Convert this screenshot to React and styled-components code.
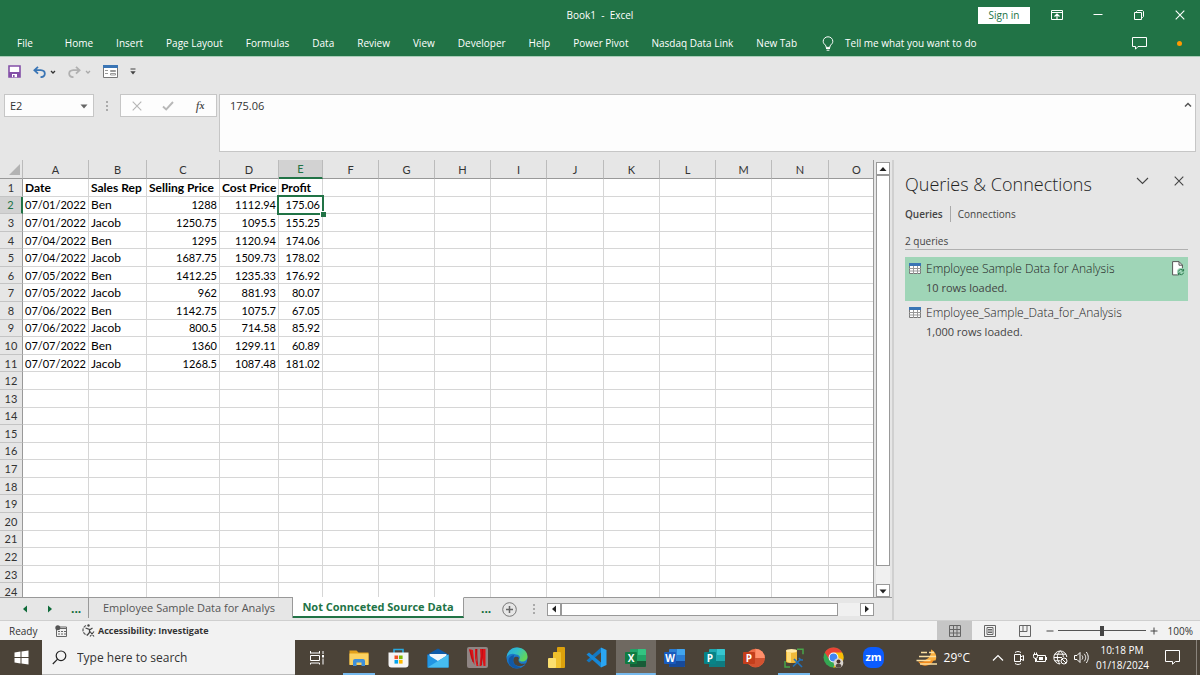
import React, { useState } from 'react'
import styled, { createGlobalStyle, css } from 'styled-components'

const menuItems = ['File', 'Home', 'Insert', 'Page Layout', 'Formulas', 'Data', 'Review', 'View', 'Developer', 'Help', 'Power Pivot', 'Nasdaq Data Link', 'New Tab']

const columns = [
    { name: 'A', width: 66 },
    { name: 'B', width: 58 },
    { name: 'C', width: 73 },
    { name: 'D', width: 59 },
    { name: 'E', width: 44 },
    { name: 'F', width: 56 },
    { name: 'G', width: 56 },
    { name: 'H', width: 56 },
    { name: 'I', width: 56 },
    { name: 'J', width: 57 },
    { name: 'K', width: 56 },
    { name: 'L', width: 56 },
    { name: 'M', width: 56 },
    { name: 'N', width: 57 },
    { name: 'O', width: 56 },
]

const sheet = [
    ['Date', 'Sales Rep', 'Selling Price', 'Cost Price', 'Profit'],
    ['07/01/2022', 'Ben', '1288', '1112.94', '175.06'],
    ['07/01/2022', 'Jacob', '1250.75', '1095.5', '155.25'],
    ['07/04/2022', 'Ben', '1295', '1120.94', '174.06'],
    ['07/04/2022', 'Jacob', '1687.75', '1509.73', '178.02'],
    ['07/05/2022', 'Ben', '1412.25', '1235.33', '176.92'],
    ['07/05/2022', 'Jacob', '962', '881.93', '80.07'],
    ['07/06/2022', 'Ben', '1142.75', '1075.7', '67.05'],
    ['07/06/2022', 'Jacob', '800.5', '714.58', '85.92'],
    ['07/07/2022', 'Ben', '1360', '1299.11', '60.89'],
    ['07/07/2022', 'Jacob', '1268.5', '1087.48', '181.02'],
]

const rowNumbers = Array.from({ length: 24 }, (_, i) => i + 1)

const queries = [
    { name: 'Employee Sample Data for Analysis', status: '10 rows loaded.' },
    { name: 'Employee_Sample_Data_for_Analysis', status: '1,000 rows loaded.' },
]

/* ---------- icons ---------- */

const Svg = ({ w = 16, h = w, box, children, ...rest }) => (
    <svg width={w} height={h} viewBox={box || `0 0 ${w} ${h}`} fill="none" aria-hidden="true" {...rest}>{children}</svg>
)

const Triangle = ({ dir = 'down', color = '#222', size = 8 }) => {
    const d = { down: 'M0.5 2.5h7l-3.5 4z', up: 'M0.5 6h7l-3.5-4z', left: 'M6 0.5v7l-4-3.5z', right: 'M2 0.5v7l4-3.5z' }
    return <Svg w={size} box="0 0 8 8"><path d={d[dir]} fill={color} /></Svg>
}

const SmallChevron = ({ color }) => (
    <Svg w={6} h={4}><path d="M1 1l2 2 2-2" stroke={color} strokeWidth="1.3" /></Svg>
)

const SaveIcon = () => (
    <Svg w={13}>
        <path d="M1 1h11v11H1z" fill="#fff" stroke="#8450a8" strokeWidth="1.6" />
        <path d="M1 7h11v5H1z" fill="#8450a8" />
        <path d="M4 9h5v3.2H4z" fill="#fff" />
        <path d="M5 10h1.6v2.2H5z" fill="#8450a8" />
    </Svg>
)

const UndoIcon = ({ color, flip }) => (
    <Svg w={13} h={12}>
        <g transform={flip ? 'matrix(-1 0 0 1 13 0)' : undefined}>
            <path d="M5 0.8L1.4 4.2 5 7.6M1.6 4.2h6.2c5.4 0.4 5.4 7-0.3 7" stroke={color} strokeWidth="1.8" />
        </g>
    </Svg>
)

const FormIcon = () => (
    <Svg w={15} h={13}>
        <path d="M0.5 0.5h14v12H0.5z" fill="#fff" stroke="#777" />
        <path d="M0 0h15v3H0z" fill="#3a75b5" />
        <path d="M2 5.5h3M2 8.5h3" stroke="#999" />
        <path d="M7.5 5.5h5v1h-5zM7.500 8.500h5v1.500h-5z" stroke="#999" />
    </Svg>
)

const BulbIcon = () => (
    <Svg w={12} h={15}>
        <path d="M4 11.4V9.8C2.6 8.4 1.2 7.4 1.2 5.3a4.8 4.5 0 0 1 9.6 0c0 2.1-1.400 3.100-2.800 4.500v1.600zM4 12.500h4M4.600 14.200h2.800" stroke="#fff" strokeWidth="1" />
    </Svg>
)

const GridIcon = () => (
    <Svg w={12} h={11}>
        <path d="M0.5 0.5h11v10H0.5z" fill="#fff" stroke="#777" />
        <path d="M0 0h12v3H0z" fill="#3a75b5" />
        <path d="M4.5 3v8M8.5 3v8M0 5.5h12M0 8h12" stroke="#999" />
    </Svg>
)

const SheetRefreshIcon = () => (
    <Svg w={13} h={15}>
        <path d="M0.6 0.6h6.4l3.4 3.4v9.9H0.6z" fill="#fff" stroke="#555" />
        <path d="M7 0.6v3.600h3.400" stroke="#555" />
        <circle cx="9" cy="11" r="4" fill="#9fd5b7" />
        <path d="M6.5 10.5a2.6 2.6 0 0 1 4.8-0.8M11.6 8v2h-2M11.6 11.6a2.6 2.6 0 0 1-4.8 0.8M6.5 14v-2h2" stroke="#217346" strokeWidth="0.9" />
    </Svg>
)

const CloseIcon = ({ w = 10, color = '#fff' }) => (
    <Svg w={w} box="0 0 10 10"><path d="M0.7 0.7l8.6 8.6M9.3 0.7L0.7 9.3" stroke={color} strokeWidth="1.1" /></Svg>
)

const OfficeIcon = ({ letter, dark, shades, round }) => (
    <Svg w={22} h={20}>
        {round ? (
            <>
                <circle cx="12.5" cy="10" r="9.3" fill={shades[1]} />
                <path d="M12.5 0.7a9.3 9.3 0 0 1 9.3 9.3h-9.3z" fill={shades[0]} />
                <path d="M3.2 10h18.6a9.3 9.3 0 0 1-18.600 0z" fill={shades[2]} />
            </>
        ) : (
            <>
                <rect x="5" y="1" width="16" height="18" rx="1" fill={shades[1]} />
                <path d="M13 1h7a1 1 0 0 1 1 1v5h-8z" fill={shades[0]} />
                <path d="M5 13h16v5a1 1 0 0 1-1 1H6a1 1 0 0 1-1-1z" fill={shades[2]} />
            </>
        )}
        <rect x="0" y="4" width="12" height="12" rx="1" fill={dark} />
        <text x="6" y="14" textAnchor="middle" fontSize="10" fontWeight="700" fontFamily="Open Sans, sans-serif" fill="#fff">{letter}</text>
    </Svg>
)

const ExplorerIcon = () => (
    <Svg w={20} h={18}>
        <path d="M0.5 1.5h7l2 2h10v12h-19z" fill="#e3a11b" />
        <path d="M0.5 4.5h19v11.5h-19z" fill="#fbd261" />
        <path d="M4 17v-5a2 2 0 0 1 2-2h8a2 2 0 0 1 2 2v5h-3.5v-3.5h-5V17z" fill="#3f8fd8" />
    </Svg>
)

const StoreIcon = () => (
    <Svg w={21} h={20}>
        <path d="M6 5V1.5h9V5" stroke="#29a9e0" strokeWidth="1.6" />
        <path d="M0.5 4.5h20v12a3 3 0 0 1-3 3h-14a3 3 0 0 1-3-3z" fill="#f5f5f5" />
        <path d="M6.5 7.5h3.6v3.6H6.5z" fill="#f25022" />
        <path d="M11 7.5h3.6v3.6H11z" fill="#7fba00" />
        <path d="M6.5 12h3.6v3.6H6.5z" fill="#00a4ef" />
        <path d="M11 12h3.6v3.6H11z" fill="#ffb900" />
    </Svg>
)

const MailIcon = () => (
    <Svg w={22} h={20}>
        <path d="M0.5 6.5L11 0.5l10.5 6v12.5h-21z" fill="#0f5ba8" />
        <path d="M2.5 6h17v8h-17z" fill="#f2f7fb" />
        <path d="M0.5 6.5L11 13l10.5-6.5V19.5h-21z" fill="#2196e3" />
        <path d="M0.5 19.5L11 13l10.500-6.500V19.500z" fill="#46bdf1" />
    </Svg>
)

const RedBarsIcon = () => (
    <Svg w={21}>
        <rect width="21" height="21" rx="2" fill="#8f8583" />
        <path d="M2 2l4 1 1.500 15-3.500-7zM8 2h2.500l-1 11 2 6h-2L8 11zM13 2h5.500v17h-2l-1-8-1 8h-2l1-10z" fill="#e01217" />
        <path d="M3 3l3 12M9.500 2l1 15M15.500 2l-1 16" stroke="#a90f13" strokeWidth="0.8" />
    </Svg>
)

const EdgeIcon = () => (
    <Svg w={22}>
        <defs>
            <linearGradient id="edgeTop" x1="0" y1="0" x2="1" y2="0.5">
                <stop offset="0" stopColor="#2aa7e2" />
                <stop offset="0.5" stopColor="#32c0c9" />
                <stop offset="1" stopColor="#62d65a" />
            </linearGradient>
        </defs>
        <circle cx="11" cy="11" r="10.5" fill="#1b78c9" />
        <path d="M0.5 11C0.8 4.5 5.5 0.5 11 0.5c6 0 10.5 4.2 10.5 9 0 3.5-2.5 5-5 5-2.6 0-4-1-3-2.4 1.3-2.3-0.5-4.6-3.5-4.6C6 5.5 1.5 7.5 0.5 11z" fill="url(#edgeTop)" />
        <path d="M7.5 11.5c-1.500 5 3 8.500 7.500 7.500 2-0.300 3.800-1.500 4.800-2.800-3 1.600-7.800 0.300-7.300-3.800l0.500-1.400c-1.500-2-4.800-1.500-5.500 0.500z" fill="#4b4338" />
        <path d="M7.5 11.5c-1.200 4.500 2.500 8.500 8 8.700-7 3.300-13-1.200-13-6.500 0-3 2-5.200 5.500-5.700z" fill="#1259a6" />
    </Svg>
)

const PowerBiIcon = () => (
    <Svg w={18} h={21}>
        <rect x="9" y="0" width="8" height="21" rx="1" fill="#dca10c" />
        <rect x="5" y="5" width="8" height="16" rx="1" fill="#f0c12d" />
        <rect x="0" y="11" width="8" height="10" rx="1" fill="#fbdf6f" />
    </Svg>
)

const CodeIcon = () => (
    <Svg w={21}>
        <path d="M15 0.5L20.5 3v15L15 20.5z" fill="#2aa5f2" />
        <path d="M15 0.5v5L3 15.5l-2.500-2z" fill="#1377c0" />
        <path d="M15 20.5v-5L3 5.5l-2.500 2z" fill="#1688d8" />
    </Svg>
)

const DatabaseIcon = () => (
    <Svg w={20}>
        <path d="M13 1.2h6v5M1 13v6h5" stroke="#48a548" strokeWidth="1.5" />
        <path d="M2 2.5v11c0 2 11 2 11 0v-11z" fill="#f1b93a" />
        <path d="M3 4v9.500c1 0.800 3 1 4 1V5z" fill="#ffdc78" />
        <ellipse cx="7.5" cy="2.8" rx="5.5" ry="1.9" fill="#ffe9a8" />
        <path d="M9 18.500l8-7.500M10 11l8 8M15 10l1.500 2 2.500 0" stroke="#2471b8" strokeWidth="1.7" />
    </Svg>
)

const ChromeIcon = () => (
    <Svg w={22}>
        <circle cx="10.5" cy="10.5" r="10" fill="#34a853" />
        <path d="M1.8 5.5a10 10 0 0 1 17.4 0L10.5 10.5l-3.500 3z" fill="#ea4335" />
        <path d="M19.200 5.500a10 10 0 0 1-9 15l5-9-4-6z" fill="#fbbc05" />
        <circle cx="10.5" cy="10.5" r="4.9" fill="#fff" />
        <circle cx="10.5" cy="10.5" r="3.9" fill="#4285f4" />
        <circle cx="15.5" cy="16" r="4.8" fill="#d8d3cd" />
        <circle cx="15.5" cy="14.5" r="2" fill="#47332b" />
        <path d="M12.5 19.5c0-4 6-4 6 0-2 1.600-4 1.600-6 0z" fill="#574a44" />
    </Svg>
)

const ZoomIcon = () => (
    <Svg w={21}>
        <rect width="21" height="21" rx="8" fill="#0b5cff" />
        <text x="10.5" y="14" textAnchor="middle" fontSize="11" fontWeight="700" fontFamily="Open Sans, sans-serif" fill="#fff">zm</text>
    </Svg>
)

const TaskViewIcon = () => (
    <Svg w={15}>
        <path d="M0.5 3.5V1M9.5 3.5V1M0.5 3h9M0.5 5.5h9v5h-9zM0.5 14.5V13h9v1.5M13 1v3M13 8.500v6" stroke="#fff" />
        <path d="M12 5h2v2.5h-2z" fill="#fff" />
    </Svg>
)

const apps = [
    { name: 'Task View', icon: <TaskViewIcon /> },
    { name: 'File Explorer', icon: <ExplorerIcon />, running: true },
    { name: 'Microsoft Store', icon: <StoreIcon /> },
    { name: 'Mail', icon: <MailIcon /> },
    { name: 'Red Bars', icon: <RedBarsIcon /> },
    { name: 'Edge', icon: <EdgeIcon /> },
    { name: 'Power BI', icon: <PowerBiIcon /> },
    { name: 'Code', icon: <CodeIcon /> },
    { name: 'Excel', icon: <OfficeIcon letter="X" dark="#107c41" shades={['#33c481', '#21a366', '#185c37']} />, running: true, active: true },
    { name: 'Word', icon: <OfficeIcon letter="W" dark="#185abd" shades={['#41a5ee', '#2b7cd3', '#174a9a']} /> },
    { name: 'Publisher', icon: <OfficeIcon letter="P" dark="#078387" shades={['#37c6d0', '#1fa9b0', '#0e7b80']} /> },
    { name: 'PowerPoint', icon: <OfficeIcon round letter="P" dark="#c43e1c" shades={['#ff8f6b', '#ed6c47', '#d35230']} /> },
    { name: 'Data Tools', icon: <DatabaseIcon />, running: true },
    { name: 'Chrome', icon: <ChromeIcon /> },
    { name: 'Zoom', icon: <ZoomIcon /> },
]

/* ---------- sections ---------- */

function Header() {
    return (
        <HeaderStyled>
            <TitleBar>
                <span />
                <h1>Book1&nbsp; -&nbsp; Excel</h1>
                <WindowControls>
                    <SignIn type="button">Sign in</SignIn>
                    <WindowButton aria-label="Ribbon display options">
                        <Svg w={12} h={10}>
                            <path d="M0.5 0.5h11v9H0.5zM0.5 2.5h11" stroke="#fff" />
                            <path d="M6 9V4.500M3.500 6.500l2.500-2.500 2.500 2.500" stroke="#fff" strokeWidth="1.200" />
                        </Svg>
                    </WindowButton>
                    <WindowButton aria-label="Minimize"><Svg w={10}><path d="M0.5 4.5h9" stroke="#fff" /></Svg></WindowButton>
                    <WindowButton aria-label="Restore">
                        <Svg w={10}><path d="M0.5 2.5h7v7h-7zM2.5 2.5v-1l1-1h5l1 1v5l-1 1h-1" stroke="#fff" /></Svg>
                    </WindowButton>
                    <WindowButton aria-label="Close"><CloseIcon /></WindowButton>
                </WindowControls>
            </TitleBar>
            <Menu>
                {menuItems.map((item) => <MenuButton key={item} type="button">{item}</MenuButton>)}
                <TellMe type="button"><BulbIcon />Tell me what you want to do</TellMe>
                <Comments type="button" aria-label="Comments">
                    <Svg w={15} h={13}><path d="M0.5 0.5h14v9H6l-2.500 2.700V9.500h-3z" stroke="#fff" /></Svg>
                </Comments>
                <Dot />
            </Menu>
        </HeaderStyled>
    )
}

function FormulaRow({ value }) {
    return (
        <FormulaStyled>
            <NameBox>
                <input aria-label="Name box" defaultValue="E2" />
                <button type="button" aria-label="Open name list"><Triangle color="#666" /></button>
            </NameBox>
            <Grip />
            <FormulaButtons>
                <button type="button" aria-label="Cancel"><CloseIcon color="#b5b5b5" /></button>
                <button type="button" aria-label="Enter">
                    <Svg w={12} h={10}><path d="M1 5.5l3.200 3L11 1" stroke="#b8b8b8" strokeWidth="1.900" /></Svg>
                </button>
                <button type="button" aria-label="Insert function"><i>f</i><small>x</small></button>
            </FormulaButtons>
            <FormulaInput>
                <textarea aria-label="Formula bar" defaultValue={value} />
                <button type="button" aria-label="Collapse formula bar">
                    <Svg w={8} h={6}><path d="M1 4.5l3-3 3 3" stroke="#555" strokeWidth="1.500" /></Svg>
                </button>
            </FormulaInput>
        </FormulaStyled>
    )
}

function Sheet() {
    return (
        <SheetViewport>
            <SheetTable>
                <colgroup>
                    <col width="23" />
                    {columns.map(({ name, width }) => <col key={name} width={width} />)}
                </colgroup>
                <thead>
                    <tr>
                        <Corner aria-label="Select all"><Svg w={11}><path d="M11 0v11H0z" fill="#b3b3b3" /></Svg></Corner>
                        {columns.map(({ name }) => <ColumnHead key={name} $selected={name === 'E'}>{name}</ColumnHead>)}
                    </tr>
                </thead>
                <tbody>
                    {rowNumbers.map((number) => {
                        const cells = sheet[number - 1] || []
                        return (
                            <tr key={number}>
                                <RowHead $selected={number === 2}>{number}</RowHead>
                                {columns.map(({ name }, i) => (
                                    <Cell
                                        key={name}
                                        $bold={number === 1}
                                        $numeric={number > 1 && i !== 1}
                                        $selected={number === 2 && name === 'E'}
                                    >
                                        {cells[i]}
                                    </Cell>
                                ))}
                            </tr>
                        )
                    })}
                </tbody>
            </SheetTable>
        </SheetViewport>
    )
}

function SheetTabs() {
    return (
        <TabsStyled>
            <TabNav>
                <button type="button" aria-label="Previous sheet"><Triangle dir="left" color="#0f6b3a" /></button>
                <button type="button" aria-label="Next sheet"><Triangle dir="right" color="#0f6b3a" /></button>
                <button type="button">...</button>
            </TabNav>
            <Tab type="button">Employee Sample Data for Analys</Tab>
            <Tab type="button" $active>Not Connceted Source Data</Tab>
            <TabEnd>
                <More type="button">...</More>
                <NewSheet type="button" aria-label="New sheet">
                    <Svg w={15}><circle cx="7.5" cy="7.5" r="6.8" stroke="#777" /><path d="M7.5 4v7M4 7.5h7" stroke="#666" strokeWidth="1.500" /></Svg>
                </NewSheet>
                <Grip />
                <HScroll>
                    <ScrollButton type="button" aria-label="Scroll left"><Triangle dir="left" /></ScrollButton>
                    <HThumb />
                    <ScrollButton type="button" aria-label="Scroll right"><Triangle dir="right" /></ScrollButton>
                </HScroll>
            </TabEnd>
        </TabsStyled>
    )
}

function QueriesPanel() {
    const [selected, setSelected] = useState(0)
    return (
        <PanelStyled>
            <PanelTitle>
                <h2>Queries &amp; Connections</h2>
                <button type="button" aria-label="Pane options"><Svg w={13} h={8}><path d="M1 1l5.5 5.5L12 1" stroke="#444" strokeWidth="1.100" /></Svg></button>
                <button type="button" aria-label="Close pane"><CloseIcon color="#444" /></button>
            </PanelTitle>
            <PanelTabs>
                <PanelTab type="button" $active>Queries</PanelTab>
                <PanelTab type="button">Connections</PanelTab>
            </PanelTabs>
            <Count>2 queries</Count>
            {queries.map(({ name, status }, i) => (
                <Query key={name} type="button" $active={selected === i} onClick={() => setSelected(i)}>
                    <GridIcon />
                    <span>
                        <QueryName>{name}</QueryName>
                        <QueryStatus>{status}</QueryStatus>
                    </span>
                    {selected === i && <SheetRefreshIcon />}
                </Query>
            ))}
        </PanelStyled>
    )
}

function StatusBar() {
    const [zoom, setZoom] = useState(50)
    return (
        <StatusStyled>
            <Ready>Ready</Ready>
            <IconButton type="button" aria-label="Record macro">
                <Svg w={12} h={12}>
                    <path d="M1.5 3.5h10v8h-10zM5 2h6.500v2" stroke="#666" />
                    <circle cx="2.8" cy="2.8" r="2.5" fill="#555" />
                    <path d="M3 6.5h2M6 6.5h2M9 6.5h2M3 9h2M6 9h2M9 9h2" stroke="#666" />
                </Svg>
            </IconButton>
            <Accessibility type="button">
                <Svg w={14} h={13}>
                    <path d="M5 1.5A5 5 0 0 0 6 11" stroke="#555" strokeWidth="1.2" strokeDasharray="3 1" />
                    <circle cx="7.5" cy="1.500" r="1.200" fill="#444" />
                    <path d="M4.500 4l4 1.500v3L6 11.500M8.500 6l3-2M9 7.500l4 5M13 7.500l-4 5" stroke="#444" strokeWidth="1.200" />
                </Svg>
                Accessibility: Investigate
            </Accessibility>
            <ViewButtons>
                <ViewButton type="button" aria-label="Normal" $active>
                    <Svg w={12} h={12}><path d="M0.5 0.5h11v11H0.5zM4.5 0.5v11M8 0.5v11M0.5 4.500h11M0.500 8h11" stroke="#666" /></Svg>
                </ViewButton>
                <ViewButton type="button" aria-label="Page layout">
                    <Svg w={12} h={12}><path d="M0.5 0.5h11v11H0.5zM3 2.5h6v7H3zM4 4.5h4M4 6h4M4 7.500h4" stroke="#666" /></Svg>
                </ViewButton>
                <ViewButton type="button" aria-label="Page break preview">
                    <Svg w={12} h={12}><path d="M0.5 0.5h11v11H0.5zM4 0.5v6M8 0.5v6M0.5 6.5H8" stroke="#666" /></Svg>
                </ViewButton>
            </ViewButtons>
            <ZoomStep type="button" aria-label="Zoom out"><Svg w={8}><path d="M0.5 4h7" stroke="#444" /></Svg></ZoomStep>
            <ZoomSlider type="range" aria-label="Zoom" value={zoom} onChange={(e) => setZoom(e.target.value)} />
            <ZoomStep type="button" aria-label="Zoom in"><Svg w={8}><path d="M0.5 4h7M4 0.5v7" stroke="#444" /></Svg></ZoomStep>
            <ZoomValue>100%</ZoomValue>
        </StatusStyled>
    )
}

function Taskbar() {
    return (
        <TaskbarStyled>
            <Start type="button" aria-label="Start">
                <Svg w={15}><path d="M0.5 2.5L6.5 1.6V7H0.5zM7.5 1.5L14.5 0.5V7h-7zM0.5 8h6v5.4L0.5 12.500zM7.500 8h7v6.500l-7-1z" fill="#fff" /></Svg>
            </Start>
            <Search>
                <Svg w={15}><circle cx="9" cy="5.8" r="4.8" stroke="#222" strokeWidth="1.2" /><path d="M5.6 9.2L0.8 14" stroke="#222" strokeWidth="1.2" /></Svg>
                <input aria-label="Search" placeholder="Type here to search" />
            </Search>
            <Apps>
                {apps.map(({ name, icon, running, active }) => (
                    <AppButton key={name} type="button" aria-label={name} $running={running} $active={active}>{icon}</AppButton>
                ))}
            </Apps>
            <Tray>
                <Weather type="button">
                    <Svg w={22} h={20}>
                        <path d="M15 1.5a9 9 0 1 1-13 12c9 1 14-4 13-12z" fill="#f08a1d" />
                        <path d="M15 1.5c4.500 2 6.500 7 4.500 11H8c5-1.500 8-6 7-11z" fill="#fbae3c" />
                        <path d="M5 4.5h6M13 4.5h5M3 8.500h17M0.500 12.500h14M4 16h17" stroke="#fbe0a0" strokeWidth="1.600" />
                    </Svg>
                    29°C
                </Weather>
                <TrayIcons>
                    <button type="button" aria-label="Show hidden icons"><Svg w={12} h={8}><path d="M1 6.5l5-5 5 5" stroke="#fff" strokeWidth="1.200" /></Svg></button>
                    <button type="button" aria-label="Meet now">
                        <Svg w={12} h={14}><path d="M1.5 3.5h6v7h-6zM7.5 6l3-1.5v5l-3-1.500M2 1.500c2-1.300 4-1.300 6 0M2 12.500c2 1.300 4 1.300 6 0" stroke="#fff" /></Svg>
                    </button>
                    <button type="button" aria-label="Battery">
                        <Svg w={14} h={12}><path d="M5 3.5h7.5v6H3.5V7M13.500 5v3M0.500 2.500h4v2a2 2 0 0 1-4 0zM1.500 0.500v2M3.500 0.500v2M2.500 6v4" stroke="#fff" /><path d="M6 5h4v3H6z" fill="#fff" /></Svg>
                    </button>
                    <button type="button" aria-label="Network">
                        <Svg w={15}><path d="M7 14A6.5 6.5 0 1 1 13.800 7M7.300 1c-4 3-4 9.500 0 13M7.300 1c2 1.500 3 3.500 3 6M1 7.500h8M2 4.200h11M2 10.800h5" stroke="#fff" /><circle cx="11" cy="11" r="3" stroke="#fff" /><path d="M9 9l4 4" stroke="#fff" /></Svg>
                    </button>
                    <button type="button" aria-label="Volume">
                        <Svg w={15} h={13}><path d="M0.5 4.5H3l3-3v10l-3-3H0.5zM8 4.500c1 1.300 1 2.700 0 4M10.200 2.800c2 2.500 2 5 0 7.500M12.300 1c2.600 3.500 2.600 7.500 0 11" stroke="#fff" /></Svg>
                    </button>
                </TrayIcons>
                <Clock><time>10:18 PM</time><time>01/18/2024</time></Clock>
                <Notifications type="button" aria-label="Notifications">
                    <Svg w={15} h={15}><path d="M0.5 0.5h14v11h-4L7.5 14.200V11.500h-7z" stroke="#fff" /></Svg>
                </Notifications>
            </Tray>
        </TaskbarStyled>
    )
}

function App() {
    return (
        <>
            <GlobalStyle />
            <Window>
                <Header />
                <QuickAccess>
                    <button type="button" aria-label="Save"><SaveIcon /></button>
                    <button type="button" aria-label="Undo"><UndoIcon color="#3a75b5" /><SmallChevron color="#333" /></button>
                    <button type="button" aria-label="Redo"><UndoIcon color="#b0b0b0" flip /><SmallChevron color="#aaa" /></button>
                    <button type="button" aria-label="Form"><FormIcon /></button>
                    <button type="button" aria-label="Customize toolbar"><Svg w={6} h={7}><path d="M0.5 1h5" stroke="#444" /><path d="M0.3 3.2h5.4L3 6.5z" fill="#444" /></Svg></button>
                </QuickAccess>
                <FormulaRow value="175.06" />
                <Workspace>
                    <Main>
                        <SheetRow>
                            <Sheet />
                            <VScroll>
                                <ScrollButton type="button" aria-label="Scroll up"><Triangle dir="up" /></ScrollButton>
                                <VThumb />
                                <ScrollButton type="button" aria-label="Scroll down"><Triangle /></ScrollButton>
                            </VScroll>
                        </SheetRow>
                        <SheetTabs />
                    </Main>
                    <QueriesPanel />
                </Workspace>
                <StatusBar />
                <Taskbar />
            </Window>
        </>
    )
}

/* ---------- styles ---------- */

const GlobalStyle = createGlobalStyle`
    *, *::before, *::after{
        box-sizing: border-box;
    }
    body{
        margin: 0;
        font-family: 'Open Sans', 'Noto Sans', sans-serif;
        font-size: 10px;
        color: #333;
    }
    h1, h2, p{
        margin: 0;
        font-weight: 400;
    }
    button, input, textarea{
        margin: 0;
        padding: 0;
        border: 0;
        background: none;
        font: inherit;
        color: inherit;
        outline: none;
    }
    svg{
        display: block;
        flex: none;
    }
`;

const Window = styled.div`
    height: 100vh;
    display: flex;
    flex-direction: column;
    overflow: hidden;
    background: #e6e6e6;
`;

const HeaderStyled = styled.header`
    flex: none;
    background: #217346;
    color: #fff;
    border-bottom: 1px solid #a9cdb8;
`;

const TitleBar = styled.div`
    height: 30px;
    display: grid;
    grid-template-columns: 1fr auto 1fr;
    align-items: center;
    h1{
        font-size: 10px;
    }
`;

const WindowControls = styled.div`
    display: flex;
    justify-content: flex-end;
    align-items: center;
    height: 28px;
`;

const SignIn = styled.button`
    width: 52px;
    height: 17px;
    margin-right: 6px;
    background: #fff;
    color: #217346;
    font-size: 10px;
    line-height: 16px;
`;

const WindowButton = styled.button`
    width: 41px;
    height: 26px;
    display: flex;
    align-items: center;
    justify-content: center;
`;

const Menu = styled.nav`
    height: 26px;
    padding: 0 18px 0 17px;
    display: flex;
    align-items: center;
    gap: 23px;
`;

const MenuButton = styled.button`
    white-space: nowrap;
    &:first-child{
        margin-right: 9px;
    }
`;

const TellMe = styled.button`
    margin-left: 2px;
    display: flex;
    align-items: center;
    gap: 11px;
    white-space: nowrap;
`;

const Comments = styled.button`
    margin-left: auto;
    margin-right: 7px;
`;

const Dot = styled.span`
    width: 5px;
    height: 5px;
    border-radius: 50%;
    background: #f90;
`;

const QuickAccess = styled.div`
    flex: none;
    height: 37px;
    padding: 0 8px 8px;
    display: flex;
    align-items: center;
    gap: 12px;
    button{
        display: flex;
        align-items: center;
        gap: 4px;
    }
`;

const FormulaStyled = styled.div`
    flex: none;
    padding: 0 4px 8px;
    display: flex;
    align-items: flex-start;
`;

const NameBox = styled.div`
    width: 90px;
    height: 23px;
    padding: 0 5px;
    display: flex;
    align-items: center;
    background: #fdfdfd;
    border: 1px solid #c6c6c6;
    input{
        flex: 1;
        min-width: 0;
        font-size: 11px;
    }
`;

const Grip = styled.span`
    width: 2px;
    height: 10px;
    margin: 7px 12px;
    flex: none;
    background: repeating-linear-gradient(#aaa 0 2px, transparent 2px 4px);
`;

const FormulaButtons = styled.div`
    width: 97px;
    height: 23px;
    margin-right: 2px;
    display: grid;
    grid-template-columns: repeat(3, 1fr);
    background: #fdfdfd;
    border: 1px solid #c6c6c6;
    button{
        display: flex;
        align-items: center;
        justify-content: center;
        font-family: 'Liberation Serif', serif;
        font-size: 13px;
        color: #444;
    }
    small{
        font-size: 10px;
        font-style: italic;
        font-weight: 700;
        line-height: 8px;
        align-self: flex-end;
        padding-bottom: 6px;
    }
`;

const FormulaInput = styled.div`
    flex: 1;
    height: 58px;
    display: flex;
    align-items: flex-start;
    background: #fdfdfd;
    border: 1px solid #c6c6c6;
    textarea{
        flex: 1;
        height: 100%;
        padding: 3px 10px;
        resize: none;
        font-size: 11px;
        line-height: 15px;
    }
    button{
        padding: 7px 3px;
    }
`;

const Workspace = styled.div`
    flex: 1;
    min-height: 0;
    display: flex;
`;

const Main = styled.main`
    flex: 1;
    min-width: 0;
    display: flex;
    flex-direction: column;
    border-right: 2px solid #d0d0d0;
`;

const SheetRow = styled.div`
    flex: 1;
    min-height: 0;
    display: flex;
`;

const SheetViewport = styled.div`
    flex: 1;
    min-width: 0;
    overflow: hidden;
    border-right: 1px solid #999;
`;

const SheetTable = styled.table`
    width: 885px;
    height: calc(100% + 4px);
    table-layout: fixed;
    border-collapse: separate;
    border-spacing: 0;
    font-family: Lato, 'Open Sans', sans-serif;
    font-size: 12px;
    line-height: 14px;
    color: #000;
    th, td{
        padding: 1px 2px 0;
        white-space: nowrap;
    }
`;

const selectedHead = css`
    background: #d2d2d2;
    color: #217346;
`;

const ColumnHead = styled.th`
    height: 19px;
    font-size: 11px;
    font-weight: 400;
    color: #333;
    border-right: 1px solid #bbb;
    border-bottom: 1px solid #999;
    ${props => props.$selected && css`
        ${selectedHead}
        border-bottom: 2px solid #217346;
    `}
`;

const Corner = styled.th`
    border-right: 1px solid #bbb;
    border-bottom: 1px solid #999;
    svg{
        margin-left: auto;
    }
`;

const RowHead = styled.th`
    font-size: 11px;
    font-weight: 400;
    color: #333;
    background: #e6e6e6;
    border-right: 1px solid #999;
    border-bottom: 1px solid #c4c4c4;
    ${props => props.$selected && css`
        ${selectedHead}
        border-right: 2px solid #217346;
    `}
`;

const Cell = styled.td`
    position: relative;
    background: #fff;
    border-right: 1px solid #d6d6d6;
    border-bottom: 1px solid #d6d6d6;
    font-weight: ${props => props.$bold ? 700 : 400};
    ${props => props.$numeric && css`
        text-align: right;
        font-size: 11px;
    `}
    ${props => props.$selected && css`
        z-index: 1;
        &::before{
            content: '';
            position: absolute;
            inset: -2px;
            border: 2px solid #217346;
        }
        &::after{
            content: '';
            position: absolute;
            right: -4px;
            bottom: -4px;
            width: 6px;
            height: 6px;
            background: #217346;
            border: solid #fff;
            border-width: 1px 0 0 1px;
        }
    `}
`;

const ScrollButton = styled.button`
    flex: none;
    width: 14px;
    height: 13px;
    display: flex;
    align-items: center;
    justify-content: center;
    background: #fff;
    border: 1px solid #999;
`;

const VScroll = styled.div`
    flex: none;
    width: 14px;
    margin: 2px 2px 0;
    display: flex;
    flex-direction: column;
    background: #f0f0f0;
`;

const VThumb = styled.div`
    flex: 1;
    margin-bottom: 18px;
    background: #fff;
    border: 1px solid #999;
`;

const TabsStyled = styled.div`
    flex: none;
    height: 23px;
    display: flex;
`;

const TabNav = styled.div`
    width: 88px;
    padding-left: 21px;
    display: flex;
    align-items: center;
    gap: 17px;
    border-top: 1px solid #999;
    font-weight: 700;
    font-size: 12px;
    line-height: 12px;
    color: #0f6b3a;
`;

const Tab = styled.button`
    height: 21px;
    padding: 0 9px;
    min-width: 171px;
    font-size: 11px;
    line-height: 18px;
    white-space: nowrap;
    color: #555;
    border-top: 1px solid #999;
    border-right: 1px solid #999;
    ${props => props.$active ? css`
        background: #fff;
        color: #217346;
        font-weight: 700;
        border-top-color: #fff;
        border-bottom: 2px solid #217346;
    ` : css`
        min-width: 205px;
        border-left: 1px solid #999;
        padding: 0 14px;
        text-align: left;
    `}
`;

const TabEnd = styled.div`
    flex: 1;
    min-width: 0;
    padding: 0 18px 0 17px;
    display: flex;
    align-items: center;
    border-top: 1px solid #999;
`;

const More = styled.button`
    margin-right: 11px;
    font-weight: 700;
    font-size: 12px;
    line-height: 12px;
    color: #0f6b3a;
`;

const NewSheet = styled.button`
    margin-right: 4px;
`;

const HScroll = styled.div`
    flex: 1;
    display: flex;
    background: #f0f0f0;
`;

const HThumb = styled.div`
    flex: 1;
    margin-right: 22px;
    background: #fff;
    border: 1px solid #999;
`;

const PanelStyled = styled.aside`
    flex: none;
    width: 306px;
    padding: 10px 12px 0 11px;
    display: flex;
    flex-direction: column;
    color: #444;
`;

const PanelTitle = styled.div`
    display: flex;
    align-items: center;
    padding-right: 4px;
    gap: 25px;
    h2{
        flex: 1;
        font-size: 18px;
        line-height: 28px;
        font-weight: 300;
        color: #222;
    }
    button{
        padding-bottom: 6px;
    }
`;

const PanelTabs = styled.div`
    display: flex;
    margin-top: 8px;
`;

const PanelTab = styled.button`
    height: 16px;
    line-height: 16px;
    font-weight: ${props => props.$active ? 600 : 400};
    & + &{
        margin-left: 7px;
        padding-left: 7px;
        border-left: 1px solid #aaa;
    }
`;

const Count = styled.p`
    margin: 11px 0 7px;
    height: 17px;
    line-height: 16px;
    border-bottom: 1px solid #b0b0b0;
`;

const Query = styled.button`
    height: 44px;
    padding: 3px 3px 0 4px;
    display: flex;
    align-items: flex-start;
    gap: 5px;
    text-align: left;
    background: ${props => props.$active ? '#9fd5b7' : 'transparent'};
    > span{
        flex: 1;
    }
    > svg:first-child{
        margin-top: 3px;
    }
    > svg:last-child{
        margin-top: 1px;
    }
`;

const QueryName = styled.span`
    display: block;
    font-size: 12px;
    line-height: 18px;
    font-weight: 300;
    color: #222;
`;

const QueryStatus = styled.span`
    display: block;
    font-size: 11px;
    line-height: 19px;
`;

const StatusStyled = styled.footer`
    flex: none;
    height: 20px;
    padding: 0 7px 0 9px;
    display: flex;
    align-items: center;
    background: #f2f2f2;
    border-top: 1px solid #cfcfcf;
`;

const Ready = styled.span`
    width: 46px;
`;

const IconButton = styled.button`
    margin-right: 14px;
`;

const Accessibility = styled.button`
    display: flex;
    align-items: center;
    gap: 3px;
    font-size: 9px;
    font-weight: 700;
`;

const ViewButtons = styled.div`
    margin-left: auto;
    display: flex;
    align-self: stretch;
`;

const ViewButton = styled.button`
    width: 35px;
    display: flex;
    align-items: center;
    justify-content: center;
    background: ${props => props.$active ? '#c6c6c6' : 'transparent'};
`;

const ZoomStep = styled.button`
    width: 8px;
    margin: 0 4px;
`;

const ZoomSlider = styled.input`
    appearance: none;
    width: 88px;
    height: 12px;
    background: linear-gradient(#555, #555) center / 100% 1px no-repeat;
    &::-webkit-slider-thumb{
        appearance: none;
        width: 4px;
        height: 10px;
        background: #444;
    }
`;

const ZoomValue = styled.span`
    width: 31px;
    text-align: right;
`;

const TaskbarStyled = styled.div`
    flex: none;
    height: 35px;
    display: flex;
    background: #4b4338;
    color: #fff;
`;

const Start = styled.button`
    flex: none;
    width: 42px;
    display: flex;
    align-items: center;
    justify-content: center;
`;

const Search = styled.label`
    flex: none;
    width: 253px;
    padding: 0 10px;
    display: flex;
    align-items: center;
    gap: 10px;
    background: #f2f2f2;
    border-bottom: 1px solid #bbb;
    input{
        flex: 1;
        min-width: 0;
        font-size: 12px;
        color: #333;
    }
    input::placeholder{
        color: #333;
        opacity: 1;
    }
`;

const Apps = styled.div`
    flex: none;
    width: 598px;
    display: grid;
    grid-template-columns: 44px repeat(14, 1fr);
`;

const AppButton = styled.button`
    display: flex;
    align-items: center;
    justify-content: center;
    background-color: ${props => props.$active ? '#6f6961' : 'transparent'};
    ${props => props.$running && css`
        background-image: linear-gradient(#76b9ed, #76b9ed);
        background-position: bottom;
        background-size: ${props.$active ? '100%' : '32px'} 2px;
        background-repeat: no-repeat;
    `}
`;

const Tray = styled.div`
    flex: 1;
    display: flex;
    align-items: center;
    justify-content: flex-end;
    margin-right: 3px;
    border-right: 1px solid #8a847c;
`;

const Weather = styled.button`
    display: flex;
    align-items: center;
    gap: 6px;
    font-size: 12px;
    margin-right: 17px;
`;

const TrayIcons = styled.div`
    display: flex;
    button{
        width: 21px;
        display: flex;
        align-items: center;
        justify-content: center;
    }
`;

const Clock = styled.div`
    width: 52px;
    margin-left: 4px;
    display: flex;
    flex-direction: column;
    text-align: center;
    line-height: 15px;
    white-space: nowrap;
`;

const Notifications = styled.button`
    width: 48px;
    display: flex;
    justify-content: center;
`;

export default App
